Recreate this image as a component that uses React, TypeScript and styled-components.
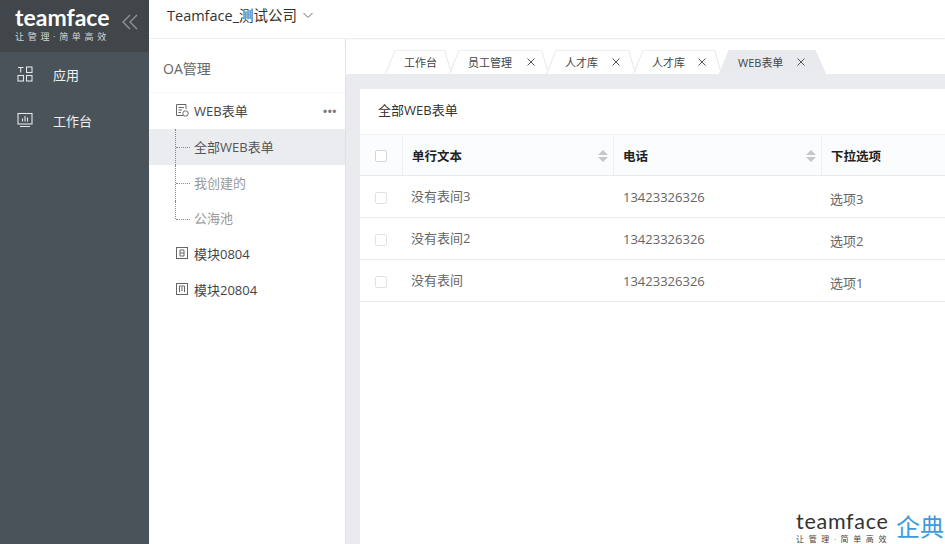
import React from "react";
import styled, { createGlobalStyle } from "styled-components";

const Global = createGlobalStyle`
  html, body { margin: 0; padding: 0; height: 100%; overflow: hidden; background: #fff; }
  body { font-family: "Open Sans", "Noto Sans CJK SC", sans-serif; font-size: 13px; color: #333; }
  * { box-sizing: border-box; }
`;

const Page = styled.div`
  position: relative;
  display: flex;
  width: 945px;
  height: 544px;
  overflow: hidden;
`;

const Sidebar = styled.aside`
  flex: 0 0 149px;
  background: #4a5359;
  display: flex;
  flex-direction: column;
`;

const Brand = styled.div`
  height: 52px;
  background: #404649;
  padding: 5px 11px 0 15px;
  display: flex;
  justify-content: space-between;
  color: #fff;
`;

const LogoBlock = styled.div`
  display: flex;
  flex-direction: column;
`;

const LogoWord = styled.div`
  font-family: "Lato", sans-serif;
  font-weight: 700;
  font-size: 23px;
  line-height: 25px;
  letter-spacing: 0;
  color: #fff;
`;

const LogoTag = styled.div`
  font-size: 9px;
  line-height: 11px;
  letter-spacing: 3.7px;
  color: #d4d6d7;
  white-space: nowrap;
  margin-top: 1px;
`;

const Collapse = styled.svg`
  width: 16px;
  height: 16px;
  margin-top: 9px;
  stroke: #8d9498;
  fill: none;
  stroke-width: 1.4;
`;

const SideItem = styled.div`
  height: 46px;
  display: flex;
  align-items: center;
  gap: 20px;
  padding: 0 0 2px 17px;
  color: #eef0f1;
  font-size: 13px;
`;

const SideIcon = styled.svg`
  width: 16px;
  height: 16px;
  stroke: #e4e6e7;
  fill: none;
  stroke-width: 1.1;
  flex: none;
`;

const Main = styled.div`
  flex: 1;
  min-width: 0;
  display: flex;
  flex-direction: column;
`;

const TopBar = styled.header`
  height: 39px;
  flex: none;
  border-bottom: 1px solid #eceef0;
  box-shadow: 0 1px 2px rgba(0, 0, 0, 0.03);
  padding: 0 0 10px 18px;
  display: flex;
  align-items: center;
  gap: 5px;
  font-size: 14.5px;
  color: #333;
`;

const Caret = styled.svg`
  width: 12px;
  height: 12px;
  margin-top: 2px;
  stroke: #666;
  fill: none;
  stroke-width: 1;
`;

const Body = styled.div`
  flex: 1;
  min-height: 0;
  display: flex;
`;

const SubNav = styled.nav`
  flex: 0 0 197px;
  border-right: 1px solid #dfe1e5;
  background: #fff;
`;

const SubTitle = styled.div`
  height: 54px;
  padding: 4px 0 0 14px;
  display: flex;
  align-items: center;
  font-size: 14px;
  color: #666;
  border-bottom: 1px solid #f5f6f7;
`;

const TreeRow = styled.div`
  position: relative;
  height: 36px;
  display: flex;
  align-items: center;
  gap: 5px;
  padding: 0 0 2px 26px;
  font-size: 13px;
  color: #444;
`;

const More = styled.span`
  position: absolute;
  right: 8px;
  top: 12px;
  font-size: 11px;
  line-height: 12px;
  font-weight: 700;
  letter-spacing: 0.5px;
  color: #777;
`;

const TreeIcon = styled.svg`
  width: 14px;
  height: 14px;
  stroke: #666;
  fill: none;
  stroke-width: 1;
  flex: none;
`;

const LeafRow = styled.div<{ $active?: boolean; $last?: boolean }>`
  position: relative;
  height: ${(p) => (p.$last ? "35px" : "36px")};
  display: flex;
  align-items: center;
  padding: 0 0 2px 45px;
  font-size: 13px;
  color: ${(p) => (p.$active ? "#555" : "#999")};
  background: ${(p) => (p.$active ? "#ebecef" : "transparent")};

  &::before {
    content: "";
    position: absolute;
    left: 26px;
    top: 0;
    height: ${(p) => (p.$last ? "18px" : "36px")};
    border-left: 1px dotted #888;
  }
  &::after {
    content: "";
    position: absolute;
    left: 27px;
    top: 18px;
    width: 14px;
    border-top: 1px dotted #888;
  }
`;

const Content = styled.section`
  flex: 1;
  min-width: 0;
  display: flex;
  flex-direction: column;
`;

const TabBar = styled.div`
  height: 35px;
  flex: none;
  padding: 11px 0 0 39px;
  display: flex;
`;

const Tab = styled.div<{ $active?: boolean; $w: number }>`
  position: relative;
  width: ${(p) => p.$w}px;
  height: 24px;
  margin-right: -3px;
  padding-left: 19px;
  display: flex;
  align-items: center;
  font-size: 11px;
  color: #444;
  z-index: ${(p) => (p.$active ? 2 : 1)};

  &::before,
  &::after {
    content: "";
    position: absolute;
    top: 0;
    bottom: 0;
    width: 60%;
    z-index: -1;
    background: ${(p) => (p.$active ? "#e8eaee" : "#fff")};
    border-top: 1px solid ${(p) => (p.$active ? "#e8eaee" : "#eceef0")};
  }
  &::before {
    left: 0;
    transform-origin: bottom left;
    transform: skewX(-22deg);
    border-left: 1px solid ${(p) => (p.$active ? "#e8eaee" : "#e6e8ec")};
  }
  &::after {
    right: 0;
    transform-origin: bottom right;
    transform: skewX(${(p) => (p.$active ? "24deg" : "16deg")});
    border-right: 1px solid ${(p) => (p.$active ? "#e8eaee" : "#e6e8ec")};
  }
`;

const TabClose = styled.svg<{ $r?: number }>`
  position: absolute;
  right: ${(p) => p.$r ?? 15}px;
  top: 8px;
  width: 8px;
  height: 8px;
  stroke: #555;
  stroke-width: 1;
`;

const Stage = styled.div`
  flex: 1;
  min-height: 0;
  background: #e9ebef;
  padding: 15px 0 0 14px;
`;

const Card = styled.div`
  height: 100%;
  background: #fff;
  overflow: hidden;
`;

const CardTitle = styled.div`
  height: 45px;
  padding: 0 0 4px 18px;
  display: flex;
  align-items: center;
  font-size: 13px;
  color: #333;
`;

const TableGrid = styled.div`
  display: grid;
  grid-template-columns: 43px 211px 208px 200px;
`;

const HeadCell = styled.div`
  position: relative;
  height: 42px;
  display: flex;
  align-items: center;
  padding-left: 9px;
  font-size: 12.5px;
  font-weight: 700;
  color: #222;
  background: #fbfcfd;
  border-top: 1px solid #eef0f2;
  border-bottom: 1px solid #e8eaed;
  border-right: 1px solid #eceef0;
`;

const CheckCell = styled.div<{ $head?: boolean }>`
  height: 42px;
  display: flex;
  align-items: center;
  padding: 2px 0 0 15px;
  background: ${(p) => (p.$head ? "#fbfcfd" : "#fff")};
  border-top: ${(p) => (p.$head ? "1px solid #eef0f2" : "0")};
  border-bottom: 1px solid #e8eaed;
  border-right: ${(p) => (p.$head ? "1px solid #eceef0" : "0")};
`;

const Check = styled.span<{ $head?: boolean }>`
  width: 12px;
  height: 12px;
  border: 1px solid ${(p) => (p.$head ? "#d3d5d9" : "#e0e2e5")};
  border-radius: 2px;
  background: #fff;
`;

const Cell = styled.div<{ $shift?: "up" | "down"; $inset?: number }>`
  height: 42px;
  display: flex;
  align-items: center;
  padding-left: ${(p) => p.$inset ?? 9}px;
  padding-top: ${(p) => (p.$shift === "down" ? "3px" : "0")};
  padding-bottom: ${(p) => (p.$shift === "up" ? "2px" : "0")};
  font-size: 13px;
  color: #666;
  border-bottom: 1px solid #e8eaed;
`;

const Sort = styled.svg`
  position: absolute;
  right: 5px;
  top: 14px;
  width: 10px;
  height: 14px;
  fill: #c4c7cc;
`;

const Watermark = styled.div`
  position: absolute;
  right: 1px;
  bottom: 0;
  display: flex;
  gap: 5px;
`;

const MarkBlock = styled.div`
  display: flex;
  flex-direction: column;
`;

const MarkWord = styled.div`
  font-family: "Lato", sans-serif;
  font-weight: 400;
  font-size: 21.5px;
  line-height: 24px;
  letter-spacing: 0.7px;
  color: #333;
`;

const MarkTag = styled.div`
  font-size: 8px;
  line-height: 11px;
  letter-spacing: 4.6px;
  color: #444;
  white-space: nowrap;
`;

const MarkName = styled.div`
  align-self: flex-end;
  font-size: 24px;
  line-height: 35px;
  color: #3d9be0;
`;

const tabs = [
  { label: "工作台", w: 67 },
  { label: "员工管理", w: 100, close: 14 },
  { label: "人才库", w: 90, close: 16 },
  { label: "人才库", w: 89, close: 16 },
  { label: "WEB表单", w: 107, close: 21, active: true },
];

const rows = [
  ["没有表间3", "13423326326", "选项3"],
  ["没有表间2", "13423326326", "选项2"],
  ["没有表间", "13423326326", "选项1"],
];

const SortIcon = () => (
  <Sort viewBox="0 0 10 14">
    <path d="M5 1 L10 6 H0 Z" />
    <path d="M5 13 L0 8 H10 Z" />
  </Sort>
);

export default function App() {
  return (
    <Page>
      <Global />
      <Sidebar>
        <Brand>
          <LogoBlock>
            <LogoWord>teamface</LogoWord>
            <LogoTag>让管理·简单高效</LogoTag>
          </LogoBlock>
          <Collapse viewBox="0 0 16 16">
            <path d="M8 1 L1 8 L8 15" />
            <path d="M15 1 L8 8 L15 15" />
          </Collapse>
        </Brand>
        <SideItem>
          <SideIcon viewBox="0 0 16 16">
            <path d="M1 1.5 H6.5 M3.7 1.5 V6.5" />
            <rect x="9.5" y="1" width="5.5" height="5.5" />
            <rect x="1" y="9.5" width="5.5" height="5.5" />
            <rect x="9.5" y="9.5" width="5.5" height="5.5" />
          </SideIcon>
          应用
        </SideItem>
        <SideItem>
          <SideIcon viewBox="0 0 16 16">
            <rect x="1" y="1.5" width="14" height="10.5" />
            <path d="M3 14.5 H13 M5.5 9.5 V6.5 M8 9.5 V4 M10.5 9.5 V5.5" />
          </SideIcon>
          工作台
        </SideItem>
      </Sidebar>
      <Main>
        <TopBar>
          Teamface_测试公司
          <Caret viewBox="0 0 12 12">
            <path d="M1.5 4 L6 8.5 L10.5 4" />
          </Caret>
        </TopBar>
        <Body>
          <SubNav>
            <SubTitle>OA管理</SubTitle>
            <TreeRow>
              <TreeIcon viewBox="0 0 14 14">
                <path d="M8 12.5 H1.5 V1.5 H11 V6 M3.5 4.5 H9 M3.5 7 H7 M3.5 9.5 H6" />
                <circle cx="10.5" cy="10.5" r="2.7" />
              </TreeIcon>
              WEB表单
              <More>•••</More>
            </TreeRow>
            <LeafRow $active>全部WEB表单</LeafRow>
            <LeafRow>我创建的</LeafRow>
            <LeafRow $last>公海池</LeafRow>
            <TreeRow>
              <TreeIcon viewBox="0 0 14 14">
                <rect x="1.5" y="1.5" width="11" height="11" />
                <path d="M5 4 H9 V10 H5 Z M5 7 H9" />
              </TreeIcon>
              模块0804
            </TreeRow>
            <TreeRow>
              <TreeIcon viewBox="0 0 14 14">
                <rect x="1.5" y="1.5" width="11" height="11" />
                <path d="M4.5 10 V4 H9.5 V10 M6 6 H8 M6 8 H8" />
              </TreeIcon>
              模块20804
            </TreeRow>
          </SubNav>
          <Content>
            <TabBar>
              {tabs.map((t, i) => (
                <Tab key={i} $w={t.w} $active={t.active}>
                  {t.label}
                  {t.close !== undefined && (
                    <TabClose $r={t.close} viewBox="0 0 8 8">
                      <path d="M0.5 0.5 L7.5 7.5 M7.5 0.5 L0.5 7.5" />
                    </TabClose>
                  )}
                </Tab>
              ))}
            </TabBar>
            <Stage>
              <Card>
                <CardTitle>全部WEB表单</CardTitle>
                <TableGrid>
                  <CheckCell $head>
                    <Check $head />
                  </CheckCell>
                  <HeadCell>
                    单行文本
                    <SortIcon />
                  </HeadCell>
                  <HeadCell>
                    电话
                    <SortIcon />
                  </HeadCell>
                  <HeadCell>下拉选项</HeadCell>
                  {rows.map((r, i) => (
                    <React.Fragment key={i}>
                      <CheckCell>
                        <Check />
                      </CheckCell>
                      <Cell $shift="up" $inset={8}>{r[0]}</Cell>
                      <Cell>{r[1]}</Cell>
                      <Cell $shift="down" $inset={8}>{r[2]}</Cell>
                    </React.Fragment>
                  ))}
                </TableGrid>
              </Card>
            </Stage>
          </Content>
        </Body>
      </Main>
      <Watermark>
        <MarkBlock>
          <MarkWord>teamface</MarkWord>
          <MarkTag>让管理·简单高效</MarkTag>
        </MarkBlock>
        <MarkName>企典</MarkName>
      </Watermark>
    </Page>
  );
}
